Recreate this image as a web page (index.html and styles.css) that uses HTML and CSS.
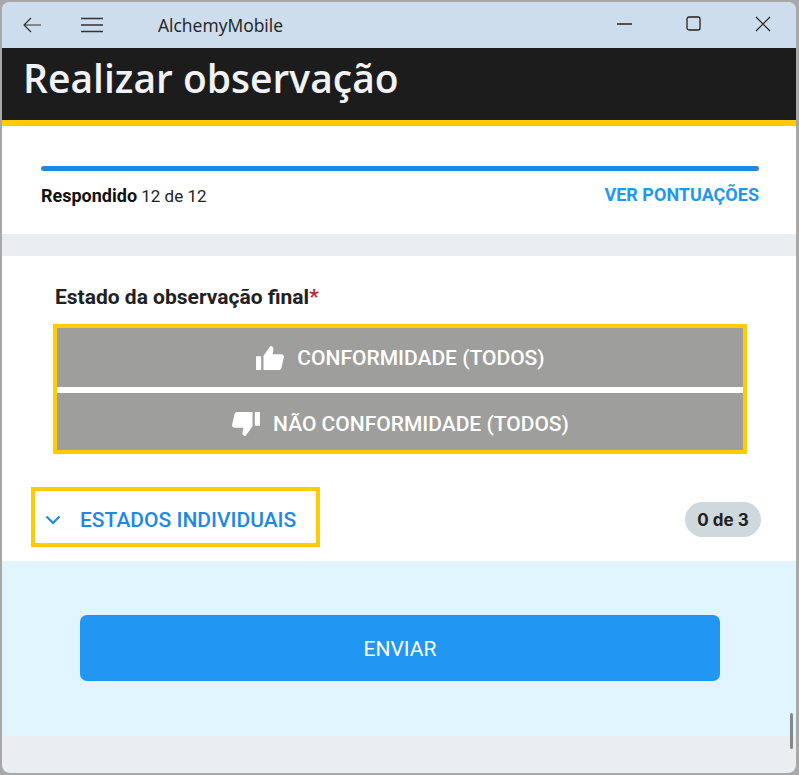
FILE: index.html
```html
<!DOCTYPE html>
<html lang="en">
<head>
    <meta charset="UTF-8">
    <title>AlchemyMobile</title>
    <link rel="stylesheet" href="styles.css">
</head>
<body>
    <div class="window">
        <div class="titlebar">
            <svg class="tb-back" width="20" height="16" viewBox="0 0 20 16"><path d="M9 1 2 8l7 7M2 8h17" fill="none" stroke="#333" stroke-width="1.2"/></svg>
            <svg class="tb-menu" width="24" height="16" viewBox="0 0 24 16"><path d="M1 1.500h22M1 8h22M1 14.500h22" fill="none" stroke="#333" stroke-width="1.300"/></svg>
            <span class="tb-title">AlchemyMobile</span>
            <div class="tb-controls">
                <svg width="16" height="16" viewBox="0 0 16 16"><path d="M0 8h15" fill="none" stroke="#222" stroke-width="1.400"/></svg>
                <svg width="16" height="16" viewBox="0 0 16 16"><rect x="1" y="1" width="13" height="13" rx="2" fill="none" stroke="#222" stroke-width="1.300"/></svg>
                <svg width="16" height="16" viewBox="0 0 16 16"><path d="M1 1l14 14M15 1 1 15" fill="none" stroke="#222" stroke-width="1.200"/></svg>
            </div>
        </div>

        <div class="page-header">
            <h1>Realizar observação</h1>
        </div>

        <div class="progress-card">
            <div class="progress-bar"></div>
            <div class="progress-row">
                <span class="answered"><b>Respondido</b> 12 de 12</span>
                <a class="scores">VER PONTUAÇÕES</a>
            </div>
        </div>

        <div class="state-card">
            <p class="state-label">Estado da observação final<span class="required">*</span></p>
            <div class="state-buttons">
                <button class="state-btn state-yes">
                    <svg width="30" height="26" viewBox="0 0 32 28"><path d="M1 12h5.500v15H1zM9 27V11.500L16.500 1c2.200 0 3.600 1.600 3.200 3.800L18.800 10h9.400c1.900 0 3.100 1.600 2.700 3.400l-2.600 11.400c-.4 1.400-1.400 2.200-2.900 2.200z" fill="#fff"/></svg>
                    CONFORMIDADE (TODOS)
                </button>
                <button class="state-btn state-no">
                    <svg width="30" height="26" viewBox="0 0 32 28"><path d="M31 1h-5.500v15H31zM23 1v15.500L15.500 27c-2.200 0-3.600-1.600-3.200-3.800l.9-5.200H3.800c-1.900 0-3.100-1.600-2.700-3.400L3.700 3.200C4.100 1.800 5.100 1 6.600 1z" fill="#fff"/></svg>
                    NÃO CONFORMIDADE (TODOS)
                </button>
            </div>
            <div class="individual-row">
                <div class="individual-toggle">
                    <svg width="16" height="10" viewBox="0 0 16 10"><path d="M1.500 1.500 8 8l6.500-6.500" fill="none" stroke="#1e88e5" stroke-width="2.200"/></svg>
                    <span>ESTADOS INDIVIDUAIS</span>
                </div>
                <span class="count-badge">0 de 3</span>
            </div>
        </div>

        <div class="send-area">
            <button class="send-btn">ENVIAR</button>
        </div>
        <div class="page-footer"></div>
        <div class="scroll-thumb"></div>
    </div>
</body>
</html>
```

FILE: styles.css
```css
* {
    margin: 0;
    padding: 0;
    box-sizing: border-box;
}

html, body {
    height: 775px;
    overflow: hidden;
}

body {
    background-color: #a8a8a8;
    font-family: 'Roboto', sans-serif;
    padding: 2px 3px 2px 2px;
}

.window {
    position: relative;
    height: 771px;
    background-color: #eaeef1;
    border-radius: 8px;
    overflow: hidden;
    display: flex;
    flex-direction: column;
}

.titlebar {
    height: 46px;
    background-color: #cddded;
    display: flex;
    align-items: center;
    padding: 0 0 1px 20px;
    flex-shrink: 0;
}

.tb-back {
    margin-right: 38px;
}

.tb-menu {
    margin-right: 54px;
}

.tb-title {
    font-family: 'Open Sans', sans-serif;
    font-size: 17.5px;
    color: #222;
}

.tb-controls {
    margin-left: auto;
    margin-right: 25px;
    margin-bottom: 2px;
    display: flex;
    gap: 53px;
}

.page-header {
    height: 78px;
    background-color: #1c1c1c;
    border-bottom: 6px solid #ffcc00;
    padding: 5px 0 0 21px;
    flex-shrink: 0;
}

h1 {
    font-family: 'Open Sans', sans-serif;
    font-size: 39px;
    font-weight: 600;
    line-height: 50px;
    color: #f0f2f5;
}

.progress-card {
    height: 108px;
    background-color: #fff;
    padding: 40px 37px 0 39px;
    flex-shrink: 0;
}

.progress-bar {
    height: 5px;
    border-radius: 3px;
    background-color: #1e88e5;
}

.progress-row {
    display: flex;
    justify-content: space-between;
    align-items: flex-start;
    margin-top: 13px;
    font-size: 17px;
    line-height: 22px;
}

.answered {
    margin-top: 1px;
    color: #222;
}

.answered b {
    color: #111;
    font-size: 18px;
    font-weight: 700;
}

.scores {
    color: #2196f3;
    font-size: 18px;
    font-weight: 700;
}

.state-card {
    height: 305px;
    margin-top: 22px;
    background-color: #fff;
    padding-top: 29px;
    flex-shrink: 0;
}

.state-label {
    margin-left: 53px;
    font-size: 21px;
    font-weight: 700;
    line-height: 24px;
    color: #212121;
}

.required {
    color: #c62828;
}

.state-buttons {
    width: 694px;
    margin: 15px 0 0 51px;
    border: 4px solid #ffcc00;
    display: flex;
    flex-direction: column;
    gap: 6px;
}

.state-btn {
    border: none;
    background-color: #9e9e9c;
    color: #fff;
    font-family: 'Roboto', sans-serif;
    font-size: 21px;
    font-weight: 500;
    display: flex;
    align-items: center;
    justify-content: center;
    gap: 12px;
}

.state-yes {
    height: 59px;
}

.state-no {
    height: 57px;
    padding-top: 4px;
}

.individual-row {
    display: flex;
    align-items: flex-start;
    justify-content: space-between;
    margin: 33px 35px 0 29px;
}

.individual-toggle {
    width: 289px;
    height: 60px;
    border: 4px solid #ffcc00;
    display: flex;
    align-items: center;
    gap: 19px;
    padding: 5px 0 0 10px;
    color: #1e88e5;
    font-size: 21px;
    font-weight: 500;
}

.count-badge {
    width: 76px;
    height: 35px;
    margin-top: 15px;
    border-radius: 18px;
    background-color: #cfd8dc;
    color: #212121;
    font-family: 'Inter', sans-serif;
    font-size: 17px;
    font-weight: 700;
    line-height: 36px;
    text-align: center;
}

.send-area {
    height: 175px;
    background-color: #e1f5fe;
    padding: 54px 0 0 78px;
    flex-shrink: 0;
}

.send-btn {
    width: 640px;
    height: 66px;
    padding-top: 1px;
    border: none;
    border-radius: 7px;
    background-color: #2196f3;
    color: #fff;
    font-family: 'Roboto', sans-serif;
    font-size: 21px;
}

.page-footer {
    flex: 1;
}

/* overlay scrollbar */
.scroll-thumb {
    position: absolute;
    right: 3px;
    bottom: 24px;
    width: 3px;
    height: 36px;
    border-radius: 2px;
    background-color: #85898c;
}
```
